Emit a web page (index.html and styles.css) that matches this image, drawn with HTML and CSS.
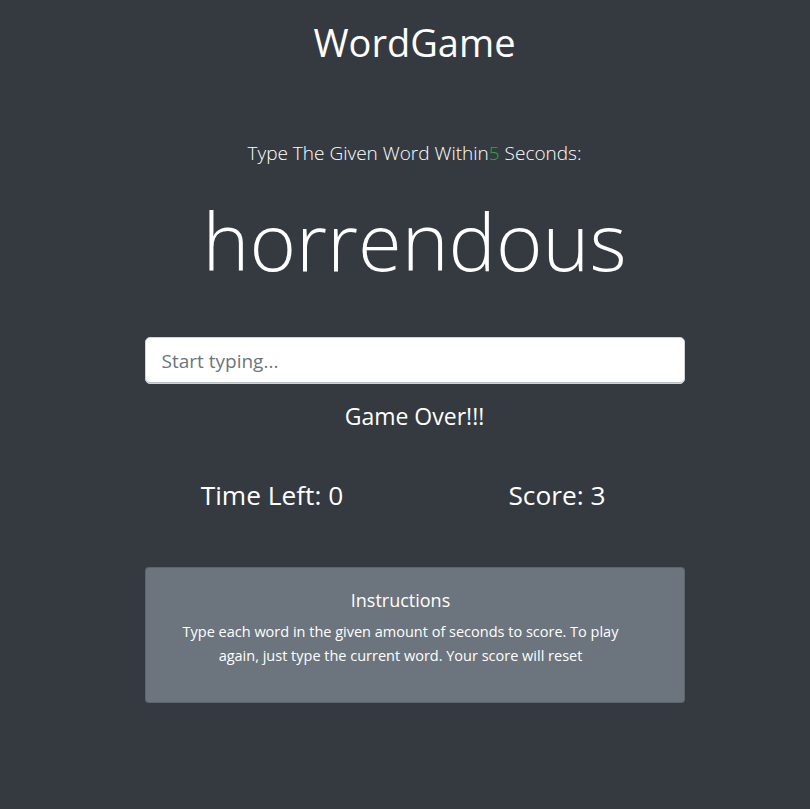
FILE: index.html
```html
<!DOCTYPE html>
<html>
<head>
<meta charset="utf-8">
<link rel="stylesheet" href="styles.css">
</head>
<body>
<div class="page">
  <header class="header"><h1 class="title">WordGame</h1></header>
  <main class="container">
    <p class="lead">Type The Given Word Within<span class="green">5</span> Seconds:</p>
    <h2 class="word">horrendous</h2>
    <input class="field" type="text" placeholder="Start typing...">
    <h4 class="status">Game Over!!!</h4>
    <div class="stats">
      <h3 class="stat">Time Left: 0</h3>
      <h3 class="stat">Score: 3</h3>
    </div>
    <div class="card">
      <h5 class="card-title">Instructions</h5>
      <p class="card-text">Type each word in the given amount of seconds to score. To play again, just type the current word. Your score will reset</p>
    </div>
  </main>
</div>
</body>
</html>
```
FILE: styles.css
```css
html, body {
  margin: 0;
  padding: 0;
  background: #343a40;
}
body {
  font-family: "Open Sans", "Noto Sans", sans-serif;
  color: #fff;
  height: 809px;
}
.page {
  display: flex;
  flex-direction: column;
  align-items: center;
  padding-left: 19px;
}
.header {
  padding-top: 18px;
}
.title {
  margin: 0;
  font-size: 38px;
  font-weight: 400;
  line-height: 48px;
}
.container {
  width: 540px;
  display: flex;
  flex-direction: column;
  align-items: stretch;
  text-align: center;
  margin-top: 72px;
}
.lead {
  margin: 0;
  font-size: 19px;
  font-weight: 300;
  line-height: 30px;
}
.green { color: #28a745; }
.word {
  margin: 22px 0 0;
  font-size: 79.5px;
  font-weight: 300;
  line-height: 100px;
}
.field {
  margin-top: 47px;
  height: 47px;
  box-sizing: border-box;
  border: 1px solid #ced4da;
  border-radius: 5px;
  padding: 0 16px;
  font-family: inherit;
  font-size: 19px;
  color: #495057;
  background: #fff;
  box-shadow: inset 0 -1px 0 #b9bec4;
}
.field::placeholder { color: #6c757d; }
.status {
  margin: 17px 0 0;
  font-size: 23px;
  font-weight: 400;
  line-height: 30px;
}
.stats {
  display: grid;
  grid-template-columns: 1fr 1fr;
  margin: 47px -15px 0;
}
.stat {
  margin: 0;
  font-size: 26.3px;
  font-weight: 400;
  line-height: 34px;
}
.card {
  margin-top: 55px;
  background: #6c757d;
  border: 1px solid rgba(0,0,0,.125);
  border-radius: 4px;
  padding: 20px 48px 34px 20px;
}
.card-title {
  margin: 0 0 8px;
  font-size: 18px;
  font-weight: 400;
  line-height: 24px;
}
.card-text {
  margin: 0;
  font-size: 14.5px;
  line-height: 24px;
}
```
